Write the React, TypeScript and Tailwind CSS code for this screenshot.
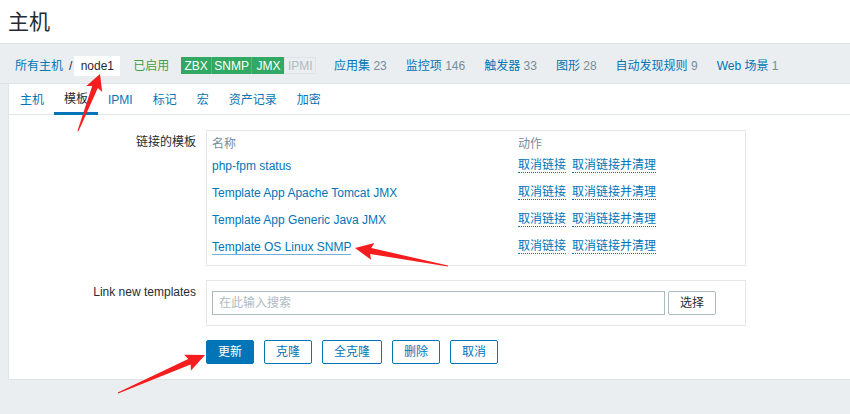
import React from "react";

type P = [number, number];

function arrowPoints(tail: P, tip: P, headLen: number, headW: number, shaftW: number, tailW: number, back: number) {
  const dx = tip[0] - tail[0];
  const dy = tip[1] - tail[1];
  const len = Math.hypot(dx, dy);
  const ux = dx / len;
  const uy = dy / len;
  const nx = -uy;
  const ny = ux;
  const bx = tip[0] - ux * headLen;
  const by = tip[1] - uy * headLen;
  const pts: P[] = [
    [tail[0] + (nx * tailW) / 2, tail[1] + (ny * tailW) / 2],
    [bx + (nx * shaftW) / 2, by + (ny * shaftW) / 2],
    [bx - ux * back + (nx * headW) / 2, by - uy * back + (ny * headW) / 2],
    tip,
    [bx - ux * back - (nx * headW) / 2, by - uy * back - (ny * headW) / 2],
    [bx - (nx * shaftW) / 2, by - (ny * shaftW) / 2],
    [tail[0] - (nx * tailW) / 2, tail[1] - (ny * tailW) / 2],
  ];
  return pts.map((p) => `${p[0].toFixed(1)},${p[1].toFixed(1)}`).join(" ");
}

const templates = [
  "php-fpm status",
  "Template App Apache Tomcat JMX",
  "Template App Generic Java JMX",
  "Template OS Linux SNMP",
];

const navCounts: [string, string, string][] = [
  ["应用集", "23", "ml-[18px]"],
  ["监控项", "146", "ml-[19px]"],
  ["触发器", "33", "ml-[19px]"],
  ["图形", "28", "ml-[19px]"],
  ["自动发现规则", "9", "ml-[19px]"],
  ["Web 场景", "1", "ml-[19px]"],
];

const tabs = ["主机", "模板", "IPMI", "标记", "宏", "资产记录", "加密"];

export default function App() {
  return (
    <div className="relative h-[414px] w-[850px] overflow-hidden bg-[#ebeef0] font-['Liberation_Sans','Noto_Sans_CJK_SC',sans-serif] text-[12px] leading-[14px] text-[#1f2c33]">
      <header className="flex h-[43px] items-center bg-white pl-[8px] pt-[1px]">
        <h1 className="text-[21px] font-normal leading-[24px] text-[#1f2c33]">主机</h1>
      </header>

      <nav className="flex h-[41px] items-center border-y border-[#dfe4e7] pl-[15px] pt-[4px]">
        <span className="text-[#0275b8]">所有主机</span>
        <span className="ml-[6px] text-[#1f2c33]">/</span>
        <span className="ml-[2px] flex h-[20px] w-[46px] items-center justify-center bg-white text-[#1f2c33]">node1</span>
        <span className="ml-[13px] text-[#429e47]">已启用</span>
        <span className="ml-[12px] flex h-[17px] items-stretch">
          <span className="flex items-center border-r border-[#4cbf7b] bg-[#31a962] px-[3px] text-white">ZBX</span>
          <span className="flex items-center border-r border-[#4cbf7b] bg-[#31a962] px-[2.5px] text-white">SNMP</span>
          <span className="flex items-center bg-[#31a962] px-[4px] text-white">JMX</span>
          <span className="flex items-center border border-[#dfe4e7] bg-[#ebeef0] px-[2.5px] text-[#acbbc2]">IPMI</span>
        </span>
        {navCounts.map(([label, count, ml]) => (
          <span key={label} className={ml}>
            <span className="text-[#0275b8]">{label}</span>
            <span className="text-[#768d99]"> {count}</span>
          </span>
        ))}
      </nav>

      <main className="ml-[8px] border-b border-l border-[#dfe4e7] bg-white">
        <div className="flex h-[31px] border-b border-[#dfe4e7] pl-[1px]">
          {tabs.map((t) => (
            <div
              key={t}
              className={
                t === "模板"
                  ? "-mb-px flex h-[31px] items-center border-b-[3px] border-[#0275b8] px-[10px] pt-[1px] text-[#1f2c33]"
                  : "flex h-[30px] items-center px-[10px] pt-[1px] text-[#0275b8]"
              }
            >
              {t}
            </div>
          ))}
        </div>

        <div className="flex flex-col pb-[15px] pt-[15px]">
          <div className="flex">
            <div className="w-[188px] pr-[1px] pt-[5px] text-right text-[#1f2c33]">链接的模板</div>
            <div className="ml-[9px] w-[540px] border border-[#e4e8ea] px-[5px] pb-[5px] pt-[4px]">
              <div className="flex h-[17px] items-center text-[#768d99]">
                <span className="w-[306px]">名称</span>
                <span>动作</span>
              </div>
              {templates.map((t, i) => (
                <div key={t} className="flex h-[27px] items-center">
                  <span className="w-[306px]">
                    <span
                      className={
                        i === 3
                          ? "border-b border-[#74b0dc] text-[#0275b8]"
                          : "text-[#0275b8]"
                      }
                    >
                      {t}
                    </span>
                  </span>
                  <span className="border-b border-dotted border-[#0275b8] text-[#0275b8]">取消链接</span>
                  <span className="ml-[6px] border-b border-dotted border-[#0275b8] text-[#0275b8]">取消链接并清理</span>
                </div>
              ))}
            </div>
          </div>

          <div className="mt-[14px] flex">
            <div className="w-[188px] pr-[1px] pt-[5px] text-right text-[#1f2c33]">Link new templates</div>
            <div className="ml-[9px] flex w-[540px] items-center border border-[#e4e8ea] px-[5px] py-[10px]">
              <div className="flex h-[24px] w-[453px] items-center border border-[#acbbc2] pl-[6px] text-[#acbbc2]">
                在此输入搜索
              </div>
              <div className="ml-[3px] flex h-[24px] w-[48px] items-center justify-center rounded-[2px] border border-[#acbbc2] text-[#1f2c33]">
                选择
              </div>
            </div>
          </div>

          <div className="mt-[14px] flex gap-[10px] pl-[197px]">
            <div className="flex h-[24px] w-[48px] items-center justify-center rounded-[2px] border border-[#0275b8] bg-[#0275b8] text-white">更新</div>
            <div className="flex h-[24px] w-[48px] items-center justify-center rounded-[2px] border border-[#0275b8] bg-white text-[#0275b8]">克隆</div>
            <div className="flex h-[24px] w-[60px] items-center justify-center rounded-[2px] border border-[#0275b8] bg-white text-[#0275b8]">全克隆</div>
            <div className="flex h-[24px] w-[48px] items-center justify-center rounded-[2px] border border-[#0275b8] bg-white text-[#0275b8]">删除</div>
            <div className="flex h-[24px] w-[48px] items-center justify-center rounded-[2px] border border-[#0275b8] bg-white text-[#0275b8]">取消</div>
          </div>
        </div>
      </main>

      <svg className="pointer-events-none absolute left-0 top-0" width="850" height="414" viewBox="0 0 850 414">
        <polygon fill="#f51d1d" points={arrowPoints([78, 131], [100, 74], 14, 17, 6, 1, 2)} />
        <polygon fill="#f51d1d" points={arrowPoints([448, 266], [355, 248], 16, 17, 6, 1, 2)} />
        <polygon fill="#f51d1d" points={arrowPoints([118, 393], [205, 355], 17, 17, 6, 1, 2)} />
      </svg>
    </div>
  );
}
